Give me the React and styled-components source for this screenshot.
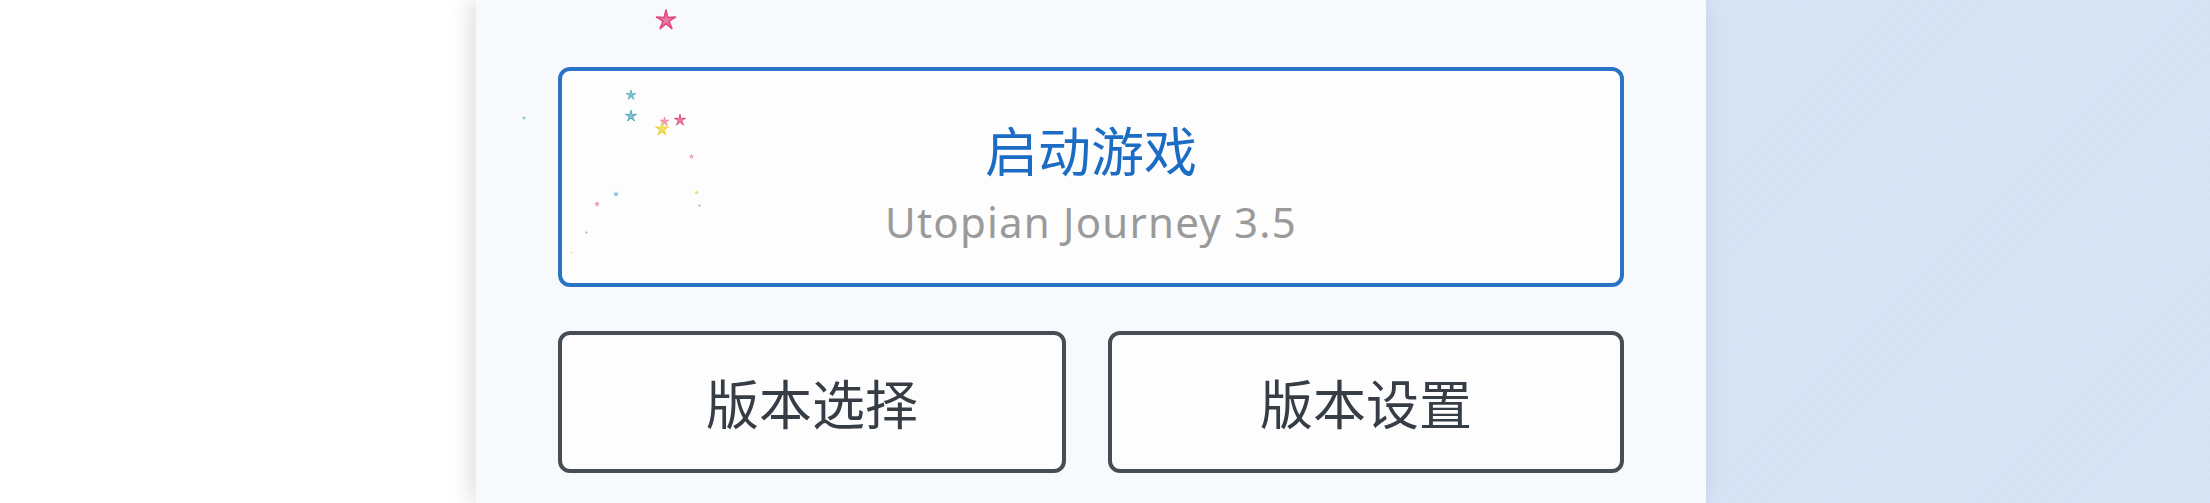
import React from "react";
import styled, { createGlobalStyle } from "styled-components";

const GlobalStyle = createGlobalStyle`
  * { box-sizing: border-box; }
  html, body { margin: 0; padding: 0; height: 100%; }
  body {
    font-family: "Noto Sans", "Noto Sans CJK SC", sans-serif;
    background: #ffffff;
    overflow: hidden;
  }
  #root { height: 100%; }
`;

const confetti = [
  { x: 178, y: 8, size: 24, color: "#e2477f" },
  { x: 149, y: 84, size: 12, color: "#4fa9b9" },
  { x: 148, y: 106, size: 14, color: "#4fa9b9" },
  { x: 183, y: 110, size: 11, color: "#ec7aa2" },
  { x: 197, y: 110, size: 14, color: "#e2477f" },
  { x: 178, y: 120, size: 16, color: "#efd23e" },
  { x: 213, y: 142, size: 5, color: "#ec6f9a" },
  { x: 218, y: 178, size: 5, color: "#efd23e" },
  { x: 222, y: 190, size: 3, color: "#4fa9b9" },
  { x: 137, y: 180, size: 6, color: "#4fa9b9" },
  { x: 118, y: 190, size: 6, color: "#ec6f9a" },
  { x: 109, y: 217, size: 3, color: "#4fa9b9" },
  { x: 94, y: 237, size: 3, color: "#efd23e" },
  { x: 46, y: 103, size: 4, color: "#4fa9b9" },
];

const Star = ({ color }) => (
  <svg viewBox="0 0 24 24" width="100%" height="100%">
    <path
      d="M12 2 L13.8 9.5 L21.5 9 L15 13.2 L17.9 20.6 L12 15.6 L6.1 20.6 L9 13.2 L2.5 9 L10.2 9.5 Z"
      fill={color}
      fillOpacity="0.7"
      stroke={color}
      strokeWidth="1.6"
      strokeLinejoin="round"
    />
  </svg>
);

const App = () => {
  return (
    <>
      <GlobalStyle />
      <Page>
        <Backdrop />
        <Panel>
          <ConfettiLayer>
            {confetti.map((c, i) => (
              <Piece
                key={i}
                style={{ left: c.x, top: c.y, width: c.size, height: c.size }}
              >
                <Star color={c.color} />
              </Piece>
            ))}
          </ConfettiLayer>
          <LaunchButton>
            <LaunchTitle>启动游戏</LaunchTitle>
            <LaunchSub>Utopian Journey 3.5</LaunchSub>
          </LaunchButton>
          <ButtonRow>
            <PlainButton>版本选择</PlainButton>
            <PlainButton>版本设置</PlainButton>
          </ButtonRow>
        </Panel>
        <SideArea />
      </Page>
    </>
  );
};

const Page = styled.div`
  display: flex;
  height: 503px;
  width: 100%;
`;

const Backdrop = styled.div`
  width: 476px;
  flex-shrink: 0;
  background: #ffffff;
`;

const Panel = styled.section`
  position: relative;
  width: 1230px;
  flex-shrink: 0;
  padding: 67px 82px 0;
  display: flex;
  flex-direction: column;
  gap: 44px;
  background: #f8f9fc;
  box-shadow: -6px 0 22px rgba(0, 0, 0, 0.13);
  z-index: 1;
`;

const ConfettiLayer = styled.div`
  position: absolute;
  inset: 0;
  pointer-events: none;
  z-index: 2;
`;

const Piece = styled.span`
  position: absolute;
  display: block;
`;

const LaunchButton = styled.button`
  height: 220px;
  width: 100%;
  border: 4px solid #2a73c5;
  border-radius: 12px;
  background: #fdfdfe;
  display: flex;
  flex-direction: column;
  align-items: center;
  justify-content: center;
  padding: 0;
  cursor: pointer;
`;

const LaunchTitle = styled.span`
  font-family: "Noto Sans CJK SC", sans-serif;
  font-size: 53px;
  line-height: 1;
  color: #1c6cc4;
  margin-top: 11px;
`;

const LaunchSub = styled.span`
  font-family: "Noto Sans", sans-serif;
  font-size: 42px;
  line-height: 1;
  letter-spacing: 1.2px;
  color: #9a9a9a;
  margin-top: 25px;
`;

const ButtonRow = styled.div`
  display: grid;
  grid-template-columns: 508fr 516fr;
  gap: 42px;
`;

const PlainButton = styled.button`
  height: 142px;
  border: 4px solid #464d55;
  border-radius: 12px;
  background: #fdfdfe;
  font-family: "Noto Sans CJK SC", sans-serif;
  font-size: 53px;
  line-height: 1;
  color: #363d45;
  cursor: pointer;
  padding: 0;
`;

const SideArea = styled.div`
  flex: 1;
  background-color: #d5e2f4;
  background-image: repeating-linear-gradient(
    135deg,
    rgba(255, 255, 255, 0.08) 0 2px,
    transparent 2px 6px
  );
`;

export default App;
